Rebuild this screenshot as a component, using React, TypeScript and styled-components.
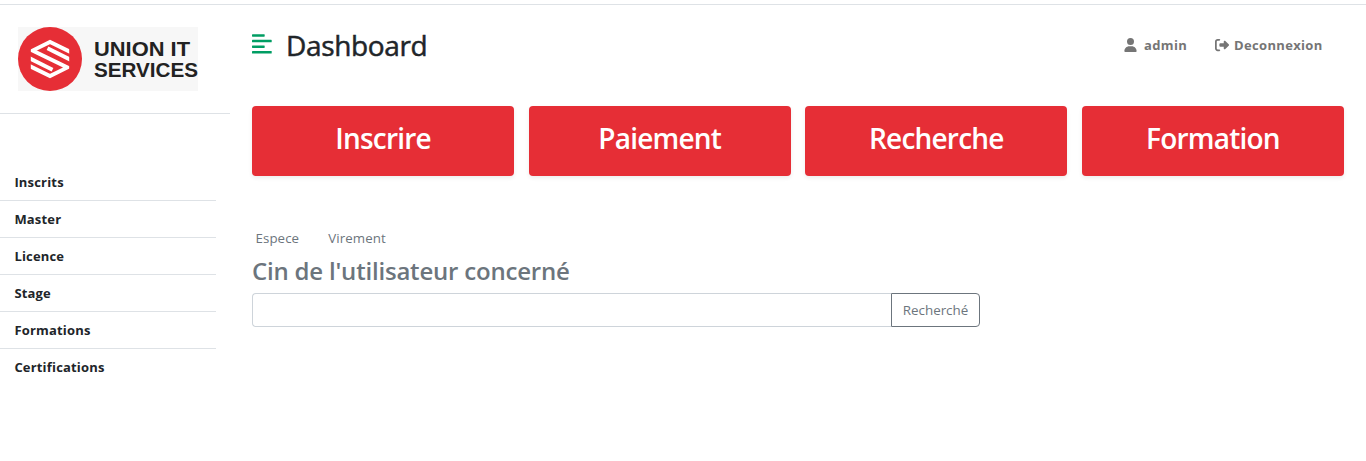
import React from "react";
import styled, { createGlobalStyle } from "styled-components";
import { FaUser, FaRightFromBracket } from "react-icons/fa6";

const GlobalStyle = createGlobalStyle`
  *, *::before, *::after { box-sizing: border-box; }
  body {
    margin: 0;
    background: #fff;
    color: #212529;
    font-family: "Segoe UI", "Open Sans", "Noto Sans", sans-serif;
    font-size: 14px;
    line-height: 21px;
  }
  h1, h2, ul { margin: 0; padding: 0; }
  ul { list-style: none; }
`;

const Page = styled.div`
  display: flex;
  height: 461px;
  padding-top: 4px;
  overflow: hidden;
`;

const Frame = styled.div`
  display: flex;
  flex: 1;
  border-top: 1px solid #dee2e6;
`;

const Sidebar = styled.aside`
  width: 230px;
  flex: none;
`;

const Brand = styled.div`
  height: 109px;
  padding: 22px 18px;
  border-bottom: 1px solid #dee2e6;
`;

const Logo = styled.svg`
  display: block;
  width: 180px;
  height: 64px;
`;

const Menu = styled.ul`
  width: 216px;
  padding-top: 50px;
`;

const MenuItem = styled.li`
  height: 37px;
  padding: 7px 14.4px 0;
  border-bottom: 1px solid #dee2e6;
  &:last-child { border-bottom: 0; }
`;

const Fit = styled.span<{ $spacing?: number }>`
  letter-spacing: ${(p) => p.$spacing ?? 0}px;
  white-space: nowrap;
`;

const MenuLink = styled(Fit)`
  font-size: 13px;
  font-weight: 700;
`;

const Main = styled.main`
  flex: 1;
  padding: 0 22px;
`;

const Header = styled.header`
  display: flex;
  align-items: center;
  height: 80px;
`;

const ToggleIcon = styled.svg`
  width: 20px;
  height: 20px;
  margin: -2px 14px 0 0;
  fill: #009d63;
`;

const Title = styled.h1`
  font-size: 28px;
  font-weight: 400;
  line-height: 34px;
  -webkit-text-stroke: 0.5px currentColor;
`;

const UserNav = styled.nav`
  display: flex;
  gap: 28px;
  margin-left: auto;
  padding-right: 21.5px;
  color: #757575;
  font-size: 13px;
  font-weight: 700;
`;

const NavItem = styled.div`
  display: flex;
  align-items: center;
`;

const UserIcon = styled(FaUser)`
  width: 13px;
  height: 14px;
  margin-right: 7px;
`;

const LogoutIcon = styled(FaRightFromBracket)`
  width: 14px;
  height: 14px;
  margin-right: 5px;
`;

const Cards = styled.div`
  display: grid;
  grid-template-columns: repeat(4, 1fr);
  gap: 14.4px;
  margin-top: 21px;
`;

const Card = styled.div`
  height: 70px;
  padding-top: 15px;
  border-radius: 4px;
  background: #e62e36;
  box-shadow: 0 2px 4px rgba(0, 0, 0, 0.075);
  color: #fff;
  font-size: 28px;
  font-weight: 600;
  line-height: 34px;
  text-align: center;
`;

const Tabs = styled.div`
  display: flex;
  gap: 29px;
  margin-top: 52px;
  padding-left: 3.5px;
  color: #6c757d;
  font-size: 13.3px;
`;

const Subtitle = styled.h2`
  margin-top: 7px;
  color: #6c757d;
  font-size: 24px;
  font-weight: 600;
  line-height: 30px;
`;

const SearchGroup = styled.div`
  display: flex;
  width: 728px;
  height: 34px;
  margin-top: 7px;
`;

const SearchInput = styled.input`
  flex: 1;
  min-width: 0;
  border: 1px solid #ced4da;
  border-right: 0;
  border-radius: 4px 0 0 4px;
  background: #fff;
`;

const SearchButton = styled.button`
  width: 89px;
  padding: 0;
  border: 1px solid #6c757d;
  border-radius: 0 4px 4px 0;
  background: #fff;
  color: #6c757d;
  font-family: inherit;
  font-size: 13.4px;
`;

const menu = ["Inscrits", "Master", "Licence", "Stage", "Formations", "Certifications"];
const cards = ["Inscrire", "Paiement", "Recherche", "Formation"];

const BrandLogo = () => (
  <Logo viewBox="0 0 180 64">
    <clipPath id="emblem">
      <rect x="12.8" y="10" width="38.4" height="44" />
    </clipPath>
    <rect width="180" height="64" fill="#f7f7f7" />
    <circle cx="32" cy="32" r="32" fill="#e62e36" />
    <g fill="none" stroke="#fff" strokeWidth="3.9" clipPath="url(#emblem)">
      <path d="M54 25.7 L32 14.9 L14.5 23.6 L49.5 40.4 L32 49.1 L10 38.3" />
      <path d="M54 33.5 L29.5 21.3" />
      <path d="M10 30.5 L34.5 42.7" />
    </g>
    <g fill="#222" fontFamily="Liberation Sans, Arial, sans-serif" fontWeight="700" fontSize="20">
      <text x="76" y="28.7" textLength="96" lengthAdjust="spacingAndGlyphs">UNION IT</text>
      <text x="76" y="49.7" textLength="104" lengthAdjust="spacingAndGlyphs">SERVICES</text>
    </g>
  </Logo>
);

export default function App() {
  return (
    <Page>
      <GlobalStyle />
      <Frame>
        <Sidebar>
          <Brand><BrandLogo /></Brand>
          <Menu>
            {menu.map((label) => (
              <MenuItem key={label}><MenuLink $spacing={0.18}>{label}</MenuLink></MenuItem>
            ))}
          </Menu>
        </Sidebar>
        <Main>
          <Header>
            <ToggleIcon viewBox="0 0 20 20">
              <rect y="0.2" width="12.7" height="2.5" rx="0.6" />
              <rect y="5.8" width="19.7" height="2.5" rx="0.6" />
              <rect y="11.4" width="12.7" height="2.5" rx="0.6" />
              <rect y="17" width="19.7" height="2.5" rx="0.6" />
            </ToggleIcon>
            <Title><Fit $spacing={-0.35}>Dashboard</Fit></Title>
            <UserNav>
              <NavItem><UserIcon /><Fit $spacing={0.35}>admin</Fit></NavItem>
              <NavItem><LogoutIcon /><Fit $spacing={0.32}>Deconnexion</Fit></NavItem>
            </UserNav>
          </Header>
          <Cards>
            {cards.map((label) => (
              <Card key={label}><Fit $spacing={-0.8}>{label}</Fit></Card>
            ))}
          </Cards>
          <Tabs><Fit $spacing={0.08}>Espece</Fit><Fit $spacing={0.1}>Virement</Fit></Tabs>
          <Subtitle><Fit $spacing={-0.2}>Cin de l'utilisateur concerné</Fit></Subtitle>
          <SearchGroup>
            <SearchInput />
            <SearchButton><Fit>Recherché</Fit></SearchButton>
          </SearchGroup>
        </Main>
      </Frame>
    </Page>
  );
}
